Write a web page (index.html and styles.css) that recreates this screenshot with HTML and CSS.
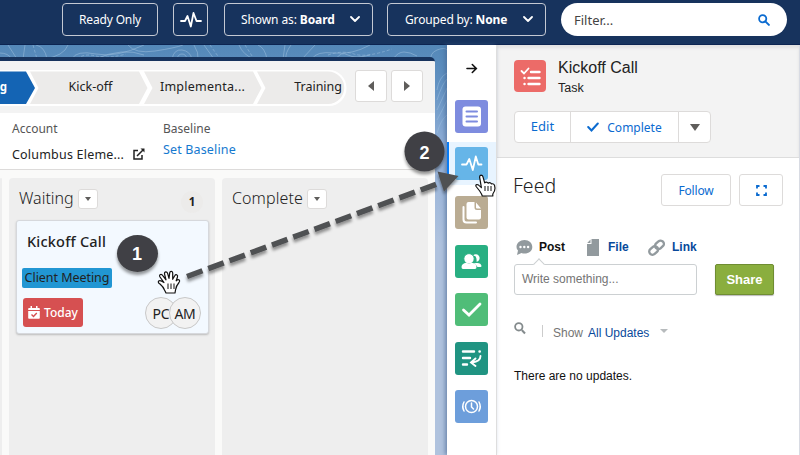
FILE: index.html
```html
<!DOCTYPE html>
<html lang="en">
<head>
<meta charset="utf-8">
<title>Task board</title>
<link rel="stylesheet" href="styles.css">
</head>
<body>
<div class="app">
  <header class="topbar">
    <button class="ghost ready"><span>Ready Only</span></button>
    <button class="ghost pulse"><svg width="22" height="18" viewBox="0 0 22 18"><path d="M1 10h4l2.500-5 3.300 10.500L13.500 2l3 8H21" fill="none" stroke="#fff" stroke-width="1.800" stroke-linejoin="round" stroke-linecap="round"/></svg></button>
    <button class="ghost shown"><span>Shown as: <b>Board</b></span><svg width="10" height="7" viewBox="0 0 10 7"><path d="M1 1l4 4 4-4" fill="none" stroke="#fff" stroke-width="1.800" stroke-linecap="round" stroke-linejoin="round"/></svg></button>
    <button class="ghost grouped"><span>Grouped by: <b>None</b></span><svg width="10" height="7" viewBox="0 0 10 7"><path d="M1 1l4 4 4-4" fill="none" stroke="#fff" stroke-width="1.800" stroke-linecap="round" stroke-linejoin="round"/></svg></button>
    <div class="filter"><span>Filter...</span><svg width="12" height="12" viewBox="0 0 12 12"><circle cx="4.700" cy="4.700" r="3.600" fill="none" stroke="#0b6bd0" stroke-width="1.800"/><path d="M7.600 7.600l3.300 3.300" stroke="#0b6bd0" stroke-width="2" stroke-linecap="round"/></svg></div>
  </header>

  <div class="workspace">
    <svg class="contours" width="447" height="120" viewBox="0 0 447 120" fill="none" stroke="#9bbddd" stroke-opacity=".55" stroke-width="1">
      <path d="M0 8q8 0 12 6M8 0l9 14M25 0l-2 14M44 14q20-3 24-14M36 0q9 2 11 14M72 14q4-9 24-5t48-9M95 14q28-12 49-4M128 0q7 9 27 6t28-6M172 14q2-10 10-9t10 9M177 14q1-5 5-5t5 5M204 0l10 14M194 0q5 8 4 14M239 0q4 10 15 14"/>
      <path d="M77 14q7-6 19-3t30-2M33 0l4 14M210 0l10 14M245 0l9 14" stroke-dasharray="3 2"/>
      <path d="M258 0q7 3 9 14M285 0l-2 14M291 0q-6 8-5 14M302 14l13-14M312 14q4-8 22-6t36-8M336 14q5-8 12-4t22 0M393 14q5-7 11-7t13 4M431 18q-2-10 6-13t10 0M437 45q2-13 10-17M437 55q5-16 10-21M437 65q7-15 10-22M437 75q7-13 10-20M437 88q4-14 10-18"/>
      <path d="M328 10q14-5 26-1t38-5" stroke-dasharray="3 2"/>
    </svg>
    <main class="board">
      <section class="pathbar">
        <div class="path">
          <svg width="347" height="37" viewBox="0 0 347 37">
            <path d="M0 0H329a17.500 18 0 0 1 0 36H0z" fill="#fff"/>
            <path d="M0 1.500H26l9 16.500-9 16H0z" fill="#1464b4"/>
            <path d="M30 1.500H139l8.500 16.500-8.500 16H30l8.500-16z" fill="#ecebea"/>
            <path d="M144 1.500H253l8.500 16.500-8.500 16H144l8.500-16z" fill="#ecebea"/>
            <path d="M257 1.500H328a16 16 0 0 1 0 32.500H257l8.500-16z" fill="#ecebea"/>
          </svg>
          <div class="labels"><b>g</b><span>Kick-off</span><span class="impl">Implementa...</span><span>Training</span></div>
        </div>
        <button class="nav"><i class="left"></i></button>
        <button class="nav"><i class="right"></i></button>
      </section>
      <section class="facts">
        <div class="fact account"><label>Account</label><div class="value"><span>Columbus Eleme...</span><svg width="12" height="12" viewBox="0 0 12 12" fill="none" stroke="#222" stroke-width="1.500"><path d="M5 2.500H1v8.500h8V7M4 8l6-6"/><path d="M7.500.5h4v4z" fill="#222" stroke="none"/></svg></div></div>
        <div class="fact baseline"><label>Baseline</label><a>Set Baseline</a></div>
      </section>
      <section class="lanes">
        <div class="lane stub"></div>
        <div class="lane">
          <div class="lanehead"><h2 class="waiting">Waiting</h2><button class="more"><i></i></button><b class="count">1</b></div>
          <article class="card">
            <h3>Kickoff Call</h3>
            <div class="tag"><span>Client Meeting</span></div>
            <div class="cardfoot">
              <div class="due"><svg width="12" height="13" viewBox="0 0 12 13"><path d="M1 2h1.500V0h1.500v2h4V0h1.500v2H11q.8 0 .8.800V4H.2V2.800Q.2 2 1 2zM.2 5h11.600v7q0 .8-.8.800H1q-.8 0-.8-.8z" fill="#fff"/><path d="M3.500 8.500l2 2L8.800 7" fill="none" stroke="#d65051" stroke-width="1.400"/></svg><span>Today</span></div>
              <div class="people"><span class="person"><em>PC</em></span><span class="person"><em>AM</em></span></div>
            </div>
          </article>
        </div>
        <div class="lane last"><div class="lanehead"><h2 class="complete">Complete</h2><button class="more"><i></i></button></div></div>
      </section>
    </main>

    <nav class="rail">
      <svg class="arrow" width="12" height="11" viewBox="0 0 12 11"><path d="M1 5.500h9M6.300 1.500l4 4-4 4" fill="none" stroke="#111" stroke-width="1.600" stroke-linecap="round"/></svg>
      <div class="slot"><svg class="ico list" viewBox="0 0 33 33"><rect x="7.500" y="6.500" width="18.500" height="20" rx="3" fill="#fff"/><path d="M11.500 11.500h10.500M11.500 16.500h10.500M11.500 21.500h10.500" stroke="#7e8cdf" stroke-width="2" stroke-linecap="round"/></svg></div>
      <div class="slot active"><svg class="ico feed" viewBox="0 0 33 33"><path d="M7 17.500h4.500L14.300 12l3.500 11 3-13.500 2.500 8H26.500" fill="none" stroke="#fff" stroke-width="1.800" stroke-linecap="round" stroke-linejoin="round"/></svg></div>
      <div class="slot"><svg class="ico files" viewBox="0 0 33 33"><path d="M13.500 6h6v5.500q0 2.500 2.500 2.500h4v7.500q0 2-2 2H13.500q-2 0-2-2V8q0-2 2-2zM21 6.500l5 6h-4q-1 0-1-1z" fill="#fff"/><path d="M8.500 11v12.500q0 3 3 3h9.500" fill="none" stroke="#fff" stroke-width="2" stroke-linecap="round"/></svg></div>
      <div class="slot"><svg class="ico group" viewBox="0 0 33 33" fill="#fff"><path d="M18 10.500a3.800 3.800 0 1 1 3.500 6.300 8 8 0 0 0-1-5.500zM21 18q5-.5 5.500 3 0 1-1 1h-3q-1-2.500-4-3.500z"/><circle cx="14" cy="13.800" r="5.200" stroke="#28af82" stroke-width="1"/><path d="M6.500 22q0-3.500 5-4.200 2.500 1.500 5 0 5 .7 5 4.200 0 2-1.500 2H8q-1.500 0-1.500-2z"/></svg></div>
      <div class="slot"><svg class="ico check" viewBox="0 0 33 33"><path d="M8.500 17l5.500 5L25 11" fill="none" stroke="#fff" stroke-width="2.800" stroke-linecap="round"/></svg></div>
      <div class="slot"><svg class="ico sched" viewBox="0 0 33 33" fill="none" stroke="#fff" stroke-width="2.400" stroke-linecap="round"><path d="M8 9.500h11M24.500 9.500h.3M8 16h7M8 22.500h4"/><path d="M25.500 14q0 5.500-8.500 6.500M20.500 16.500l-4.500 4 4.500 3.500" stroke-width="1.900"/></svg></div>
      <div class="slot"><svg class="ico clock" viewBox="0 0 33 33" fill="none" stroke="#fff" stroke-width="1.500" stroke-linecap="round"><circle cx="16.500" cy="16.500" r="6"/><path d="M16.500 13v4l2 2M9 12q-2.500 4.500 0 9M24 12q2.500 4.500 0 9"/></svg></div>
    </nav>

    <aside class="detail">
      <div class="record">
        <div class="title">
          <svg class="taskicon" viewBox="0 0 32 32" fill="none" stroke="#fff" stroke-width="2.400" stroke-linecap="round"><path d="M7.500 11l2.500 2.500 4.500-5" stroke-width="1.800"/><path d="M17 12h8.500M14.500 18h11M14.500 24h11M10.500 18h.1M10.500 24h.1"/></svg>
          <div><h1>Kickoff Call</h1><p>Task</p></div>
        </div>
        <div class="actions">
          <button class="edit"><span>Edit</span></button><button class="done"><svg width="12" height="10" viewBox="0 0 12 10"><path d="M1.200 5l3.300 3.500L10.800 1.500" fill="none" stroke="#0b6bd0" stroke-width="2" stroke-linecap="round"/></svg><span>Complete</span></button><button class="drop"><i></i></button>
        </div>
      </div>
      <div class="feedhead"><h2>Feed</h2><button class="follow"><span>Follow</span></button><button class="expand"><svg width="11" height="11" viewBox="0 0 11 11"><path d="M1 3.500V1h2.500M7.500 1H10v2.500M10 7.500V10H7.500M3.500 10H1V7.500" fill="none" stroke="#0b6bd0" stroke-width="1.800"/></svg></button></div>
      <div class="tabs">
        <svg class="ti" width="17" height="17" viewBox="0 0 17 17"><path d="M8.500 1C13 1 16.300 4 16.300 8s-3.300 6.500-7.800 6.500q-1.500 0-3-.5L1 16l1-4.500Q.5 10 .5 8C.5 4 4 1 8.500 1z" fill="#929a9e"/><g fill="#fff"><circle cx="4.500" cy="8" r="1.200"/><circle cx="8.300" cy="8" r="1.200"/><circle cx="12.100" cy="8" r="1.200"/></g></svg>
        <b class="post">Post</b>
        <svg class="tf" width="12" height="17" viewBox="0 0 12 17"><path d="M4.500 0H12v17H0V5h4.500zM3.500.5V4H.2z" fill="#929a9e"/></svg>
        <b class="file">File</b>
        <svg class="tl" width="17" height="17" viewBox="0 0 17 17" fill="none" stroke="#929a9e" stroke-width="2.400"><rect x="-3" y="-4.500" width="6.500" height="9.500" rx="3.200" transform="translate(11.500 5.500) rotate(48)"/><rect x="-3" y="-5" width="6.500" height="9.500" rx="3.200" transform="translate(5.300 11.500) rotate(48)"/></svg>
        <b class="link">Link</b>
      </div>
      <div class="compose"><div class="input"><span>Write something...</span><i class="notch"></i></div><button class="share"><span>Share</span></button></div>
      <div class="updates"><svg width="12" height="13" viewBox="0 0 12 13"><circle cx="4.800" cy="4.800" r="3.700" fill="none" stroke="#848b8d" stroke-width="1.800"/><path d="M7.800 8l3.200 3.500" stroke="#848b8d" stroke-width="2"/></svg><i class="bar"></i><span class="show">Show</span><a>All Updates</a><i class="tri"></i></div>
      <p class="none">There are no updates.</p>
    </aside>
  </div>

  <svg class="guide" width="800" height="455" viewBox="0 0 800 455">
    <defs><filter id="s" x="-20%" y="-20%" width="140%" height="150%"><feDropShadow dx="0" dy="3" stdDeviation="1.800" flood-color="#000" flood-opacity=".4"/></filter></defs>
    <g filter="url(#s)"><path d="M187 276.500L441 182.500" stroke="#505153" stroke-width="5.500" stroke-dasharray="16.500 6.150" fill="none"/><path d="M437.500 171.500L458.500 176 444 191.500 441 182.500z" fill="#505153"/></g>
    <g fill="#fff" stroke="#111" stroke-width="1.200" stroke-linejoin="round"><path d="M164.500 290q-1-3-4.500-6-2.500-1.700-1.300-3 1.500-1.200 5.300 1.500l-4-5.500q-1-1.900.5-2.500 1.300-.4 2.500 1.300l3 4-1.500-6q-.2-1.800 1.200-2 1.300-.1 1.900 1.500l1.400 5 .7-5.500q.3-1.700 1.700-1.500 1.300.2 1.300 1.800l0 6.200 2-3.500q.8-1.500 2-1 1.400.7.7 2.500l-1.200 3.500q1.700-1.800 3-.8 1 1-.2 2.500-2.700 3-3.500 7.500l-.5 3h-9z"/><path d="M168 283.500v5.500M171 283.500v5.500M174 283.500v5.500" stroke-width="1"/></g>
    <g fill="#fff" stroke="#111" stroke-width="1.200" stroke-linejoin="round"><path d="M481.500 194l-1.800-3-3.600-4.500q-.8-1.700.8-2 1.200 0 2.300 1.100l2.200 2-1.800-10.500q0-1.900 1.400-2 1.600 0 2 1.700l1.700 6q1.700-1.700 3.500.4 1.900-1.300 3.300.7 2.100-.6 3 1.300l.5 3q0 3-2.200 5.800v2h-10.500z"/><path d="M485 186v5M488 186v5M491 186v5" stroke-width="1"/></g>
    <g filter="url(#s)" fill="#404144"><ellipse cx="137.500" cy="253.500" rx="20.500" ry="18.500"/><circle cx="424.500" cy="151.500" r="20"/></g>
    <g class="num" text-anchor="middle"><text x="137" y="260">1</text><text x="424.500" y="159">2</text></g>
  </svg>
</div>
</body>
</html>
```
FILE: styles.css
```css
* { box-sizing: border-box; }
body { margin: 0; overflow: hidden; font-family: "Noto Sans", sans-serif; font-size: 13px; color: #222; }
h1, h2, h3, p { margin: 0; font-weight: 400; }
button { font: inherit; padding: 0; margin: 0; border: 1px solid #dddbda; background: #fff; border-radius: 3px; display: flex; align-items: center; justify-content: center; flex: none; }
svg { display: block; flex: none; }
span, b, a, em { white-space: nowrap; }
.app { width: 800px; height: 455px; position: relative; overflow: hidden; background: #fff; }

.topbar { height: 45px; background: #17335d; border-bottom: 1px solid #0c2451; display: flex; align-items: flex-start; padding: 3px 0 0 62px; }
.ghost { height: 33px; background: transparent; border: 1px solid #c4c9d3; color: #fff; font-size: 12px; border-radius: 4px; }
.ready { width: 96px; margin-right: 15px; }
.ready span { letter-spacing: -.15px; }
.pulse { width: 35px; margin-right: 16px; }
.shown { width: 149px; margin-right: 14px; justify-content: space-between; padding: 0 12px 0 16px; letter-spacing: -.1px; }
.grouped { width: 159px; margin-right: 15px; justify-content: space-between; padding: 0 12px 0 17px; letter-spacing: -.15px; }
.filter { width: 226px; height: 33px; border-radius: 17px; background: #fff; display: flex; align-items: center; justify-content: space-between; padding: 0 17px 0 13px; font-size: 13px; color: #444; }

.workspace { height: 410px; position: relative; display: flex; background: linear-gradient(#5488b8 0, #6292c2 40px, #91afd7 100px, #b0c3de 200px, #b0c3de 100%); }
.contours { position: absolute; left: 0; top: 0; }
.board { position: relative; width: 435px; margin: 12px 12px 0 0; background: #fafaf9; border-top: 4px solid #17335d; border-radius: 0 5px 0 0; flex: none; overflow: hidden; }
.pathbar { height: 52px; background: #f3f3f3; display: flex; padding-top: 9px; align-items: flex-start; }
.path { width: 347px; margin-right: 8px; display: grid; flex: none; }
.path > * { grid-area: 1 / 1; }
.labels { display: grid; grid-template-columns: 35px 111px 113px 88px; align-items: center; height: 33px; font-size: 12.500px; }
.labels span { text-align: center; }
.labels .impl { letter-spacing: .25px; }
.labels span:last-child { text-align: right; padding-right: 5px; }
.labels b { color: #fff; justify-self: end; margin-right: 28px; font-size: 11.5px; }
.nav { width: 32px; height: 32px; margin-right: 4px; }
.nav i { border: 5px solid transparent; }
.nav .left { border-right: 6px solid #5f5d5b; border-left: 0; }
.nav .right { border-left: 6px solid #5f5d5b; border-right: 0; }
.facts { height: 57px; background: #fff; border-bottom: 1px solid #dddbda; display: flex; padding: 8px 0 0 12px; }
.fact { display: flex; flex-direction: column; font-size: 12.500px; }
.account { width: 151px; }
.fact label { font-size: 12px; line-height: 17px; color: #555; margin-top: -1px; }
.value { display: flex; align-items: center; gap: 9px; height: 18px; margin-top: 8px; letter-spacing: .2px; }
.baseline a { color: #1679cf; line-height: 18px; margin-top: 4px; font-size: 12.500px; letter-spacing: .15px; }
.lanes { display: flex; gap: 7px; padding-top: 8px; height: 290px; }
.lane { width: 206px; flex: none; background: #eee; border-radius: 4px 4px 0 0; padding: 0 7px; }
.lane.stub { width: 2px; padding: 0; }
.lane.last { padding-left: 7px; }
.lanehead { height: 42px; display: flex; align-items: center; padding-left: 3px; }
.lanehead h2 { font-size: 16px; font-weight: 300; margin-top: -3px; }
.waiting { width: 59px; }
.complete { width: 75px; letter-spacing: .1px; }
.more { width: 20px; height: 20px; }
.more i { border: 3.500px solid transparent; border-top: 4px solid #5f5d5b; border-bottom: 0; }
.count { margin: 5px 5px 0 auto; width: 22px; height: 22px; border-radius: 50%; background: #ecebea; text-align: center; line-height: 22px; font-size: 11.500px; }
.card { height: 114px; background: #f3f9ff; border: 1px solid #d6d8dc; border-radius: 3px; box-shadow: 0 1px 2px #bbb; padding: 10px 7px 0 5px; width: 193px; }
.card h3 { font-size: 14.500px; line-height: 20px; font-weight: 500; padding-left: 5px; letter-spacing: .2px; }
.tag { background: #2196d3; width: 90px; height: 20px; margin-top: 16.500px; border-radius: 2px; display: flex; align-items: center; justify-content: center; font-size: 12.500px; letter-spacing: -.05px; }
.cardfoot { display: flex; justify-content: space-between; margin-top: 9.500px; padding-left: 1px; }
.due { width: 60px; height: 29px; margin-top: 1px; background: #d65051; border-radius: 3px; color: #fff; display: flex; align-items: center; justify-content: center; gap: 4px; font-size: 12px; font-weight: 500; }
.people { display: flex; }
.person { width: 32px; height: 32px; border-radius: 50%; border: 1px solid #c8c8c8; background: #f2f2f2; font-size: 14px; display: flex; align-items: center; justify-content: center; margin-right: -8px; }
.person:last-child { margin-right: 0; }
.person em { font-style: normal; letter-spacing: -.2px; }

.rail { width: 50px; flex: none; background: #fff; box-shadow: -2px 0 4px #45638f99; border-right: 1px solid #dedede; position: relative; display: flex; flex-direction: column; }
.arrow { margin: 18px 0 18px 19px; }
.slot { height: 48.400px; flex: none; display: flex; align-items: center; padding-left: 8px; }
.slot.active { background: #e8f4ff; border-left: 2px solid #087bf5; padding-left: 6px; height: 43px; margin: 2px 0 3.400px; }
.ico { width: 33px; height: 33px; border-radius: 3px; }
.list { background: #7e8cdf; }
.feed { background: #66b5e8; }
.files { background: #baac93; }
.group { background: #28af82; }
.check { background: #50bd78; }
.sched { background: #209482; }
.clock { background: #6d9edb; }

.detail { flex: 1; background: #fff; border-right: 1px solid #d8dbe3; font-family: "Liberation Sans", sans-serif; min-width: 0; }
.record { height: 113px; background: #f3f3f3; border-bottom: 1px solid #ddd; padding: 13px 0 0 17px; box-shadow: inset 0 3px 3px #e1e1e1; }
.title { display: flex; gap: 12px; height: 40px; padding-top: 2px; }
.taskicon { width: 32px; height: 32px; border-radius: 4px; background: #ec6b68; }
.title h1 { font-size: 16px; line-height: 18px; margin-top: -1px; }
.title p { font-size: 12.500px; line-height: 15px; margin-top: 4px; }
.actions { display: flex; margin-top: 13px; font-family: "Noto Sans", sans-serif; color: #0b6bd0; }
.actions button { height: 32px; color: #0b6bd0; }
.actions .edit { width: 57px; border-radius: 4px 0 0 4px; }
.actions .edit span { margin-top: -2px; }
.actions .done { width: 109px; margin-left: -1px; border-radius: 0; gap: 8px; font-size: 12px; }
.actions .drop { width: 33px; margin-left: -1px; border-radius: 0 4px 4px 0; }
.drop i { border: 5.500px solid transparent; border-top: 7px solid #5f5d5b; border-bottom: 0; }
.feedhead { display: flex; padding: 16px 0 0 16px; font-family: "Noto Sans", sans-serif; }
.feedhead h2 { width: 148px; font-size: 19.500px; line-height: 24px; font-weight: 300; }
.feedhead button { height: 32px; color: #0b6bd0; font-size: 12px; }
.feedhead .follow { width: 70px; margin-right: 8px; letter-spacing: -.15px; }
.expand { width: 44px; }
.tabs { display: flex; align-items: center; padding: 32px 0 0 19px; height: 50px; font-size: 12px; color: #08499b; }
.tabs .post { color: #111; width: 48px; margin-left: 6px; }
.tabs .file { width: 40px; margin-left: 9px; }
.tabs .link { margin-left: 7px; }
.compose { display: flex; margin: 8px 0 0 17px; }
.input { width: 183px; height: 31px; border: 1px solid #ccd0d2; border-radius: 3px; position: relative; color: #747474; font-size: 12px; line-height: 28px; padding-left: 7px; }
.notch { position: absolute; left: 20px; top: -5px; width: 8px; height: 8px; border: 1px solid #ccd0d2; border-right: 0; border-bottom: 0; background: #fff; transform: rotate(45deg); }
.share { width: 59px; height: 31px; margin-left: 18px; background: #8aae3e; border: 1px solid #6f8d32; border-radius: 2px; color: #fff; font-weight: 700; box-shadow: 0 1px 1px #bbb; }
.updates { display: flex; align-items: center; height: 24px; margin: 24px 0 0 17px; font-size: 12px; }
.updates svg { margin-top: -6px; }
.bar { width: 1px; height: 12px; background: #ccc; margin: 0 10px 0 16px; }
.show { color: #747474; width: 35px; margin-top: 3px; }
.updates a { color: #08499b; margin-top: 3px; width: 72px; }
.tri { border: 4px solid transparent; border-top: 4px solid #b7bbbd; border-bottom: 0; }
.none { margin: 26px 0 0 17px; font-size: 12px; line-height: 14px; color: #111; }

.guide { position: absolute; left: 0; top: 0; pointer-events: none; }
.num { font: 700 18px "Liberation Sans", sans-serif; fill: #fff; }
```
